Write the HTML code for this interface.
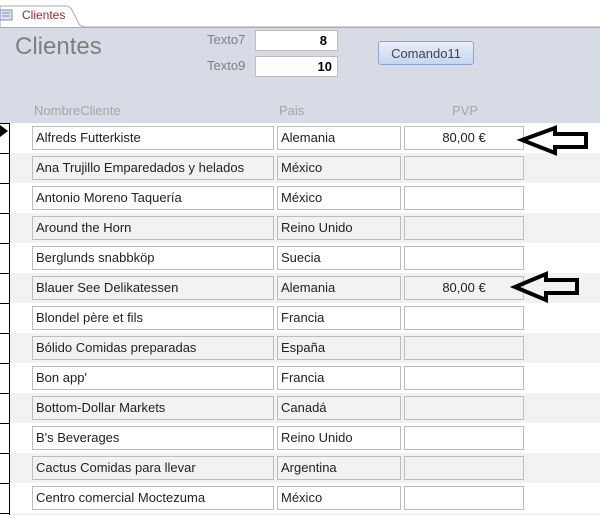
<!DOCTYPE html>
<html><head><meta charset="utf-8"><style>
*{margin:0;padding:0;box-sizing:border-box}
html,body{width:600px;height:515px;overflow:hidden}
body{background:#fff;font-family:"Liberation Sans",sans-serif;position:relative}
.abs{position:absolute}
.hdr{left:0;top:27px;width:600px;height:96px;background:#d6dbe5;border-top:1px solid #a6abb5}
.lbl{color:#7f7f7f;font-size:13px}
.hl{color:#a5a5a5;font-size:13px;top:103px}
.tb{position:absolute;border:1px solid #bdbdbd;height:24px;font-size:13px;color:#222;padding:3px 0 0 3px;white-space:nowrap;overflow:hidden}
.row{position:absolute;left:10px;width:590px;height:30px}
.sel{position:absolute;left:0;width:10px;height:30px;border-top:1px solid #000;border-right:1px solid #000}
</style></head><body>
<svg class="abs" style="left:0;top:0" width="600" height="28">
<path d="M0 27 V6 H66 Q70 6 72 10 L79 24 Q81 27 86 27 H600" fill="#fff" stroke="#a6abb5"/>
<rect x="0" y="10" width="12" height="10" fill="#dfe6f2" stroke="#7d8fb0"/>
<line x1="2" y1="13" x2="10" y2="13" stroke="#7d8fb0"/><line x1="2" y1="16" x2="10" y2="16" stroke="#7d8fb0"/>
</svg>
<div class="abs" style="left:22px;top:8px;font-size:12px;color:#a3262a">Clientes</div>
<div class="abs hdr"></div>
<div class="abs" style="left:15px;top:33px;font-size:24px;color:#7f7f7f">Clientes</div>
<div class="abs lbl" style="left:207px;top:32px">Texto7</div>
<div class="abs lbl" style="left:207px;top:58px">Texto9</div>
<div class="abs" style="left:255px;top:30px;width:83px;height:21px;background:#fff;border:1px solid #bdbdbd;font-size:13px;font-weight:bold;text-align:right;padding:2px 10px 0 0">8</div>
<div class="abs" style="left:255px;top:56px;width:83px;height:21px;background:#fff;border:1px solid #bdbdbd;font-size:13px;font-weight:bold;text-align:right;padding:2px 5px 0 0">10</div>
<div class="abs" style="left:378px;top:41px;width:96px;height:24px;border:1px solid #8fa6d0;border-radius:3px;background:linear-gradient(#e9effa,#c6d5f0);font-size:13px;color:#444;text-align:center;padding-top:4px">Comando11</div>
<div class="abs hl" style="left:34px">NombreCliente</div>
<div class="abs hl" style="left:279px">Pais</div>
<div class="abs hl" style="left:452px">PVP</div>
<div id="rows"></div>
<svg class="abs" style="left:0;top:123px" width="12" height="30">
<path d="M0 2 L8 8 L0 14Z" fill="#000"/>
</svg>
<svg class="abs" style="left:0;top:0" width="600" height="515">
<path d="M522 140 L555 128 V134 H586 V147 H555 V153 Z" fill="none" stroke="#000" stroke-width="4" stroke-linejoin="miter"/>
<path d="M515 287 L546 274 V280 H577 V293 H546 V300 Z" fill="none" stroke="#000" stroke-width="4"/>
</svg>
<script>
var d=[["Alfreds Futterkiste","Alemania","80,00 €"],["Ana Trujillo Emparedados y helados","México",""],["Antonio Moreno Taquería","México",""],["Around the Horn","Reino Unido",""],["Berglunds snabbköp","Suecia",""],["Blauer See Delikatessen","Alemania","80,00 €"],["Blondel père et fils","Francia",""],["Bólido Comidas preparadas","España",""],["Bon app'","Francia",""],["Bottom-Dollar Markets","Canadá",""],["B's Beverages","Reino Unido",""],["Cactus Comidas para llevar","Argentina",""],["Centro comercial Moctezuma","México",""]];
var h="";
for(var i=0;i<13;i++){var y=123+i*30;var g=i%2?"#f2f2f2":"#fff";
h+='<div class="row" style="top:'+y+'px;background:'+g+'"></div><div class="sel" style="top:'+y+'px"></div>';
var r=d[i];
h+='<div class="tb" style="left:32px;top:'+(y+3)+'px;width:242px;background:'+g+'">'+r[0]+'</div>';
h+='<div class="tb" style="left:277px;top:'+(y+3)+'px;width:124px;background:'+g+'">'+r[1]+'</div>';
h+='<div class="tb" style="left:404px;top:'+(y+3)+'px;width:120px;background:'+g+';text-align:center;padding-left:0">'+r[2]+'</div>';}
h+='<div class="row" style="top:513px;height:2px;background:#f2f2f2"></div><div class="sel" style="top:513px;height:2px"></div>';
document.getElementById("rows").innerHTML=h;
</script>
</body></html>
